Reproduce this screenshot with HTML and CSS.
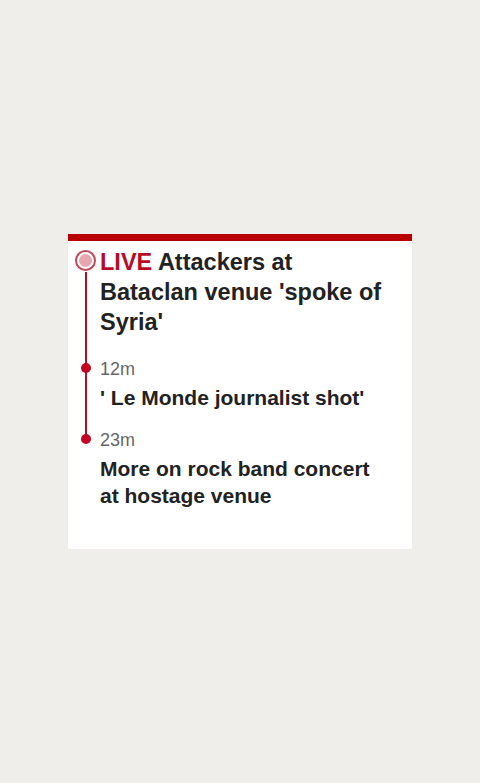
FILE: index.html
```html
<!DOCTYPE html>
<html>
<head>
<meta charset="utf-8">
<link rel="stylesheet" href="styles.css">
</head>
<body>
<div class="card">
  <div class="timeline">
    <span class="live-dot"><span class="live-core"></span></span>
    <h1 class="headline"><span class="live">LIVE</span> Attackers at Bataclan venue 'spoke of Syria'</h1>
    <div class="entry">
      <div class="time">12m</div>
      <div class="title">' Le Monde journalist shot'</div>
    </div>
    <div class="entry">
      <div class="time">23m</div>
      <div class="title">More on rock band concert at hostage venue</div>
    </div>
  </div>
</div>
</body>
</html>
```
FILE: styles.css
```css
html, body {
  margin: 0;
  height: 100%;
}
body {
  background: #f0eeea;
  display: flex;
  align-items: center;
  justify-content: center;
  font-family: "Liberation Sans", Arial, sans-serif;
  color: #222;
}
.card {
  width: 344px;
  box-sizing: border-box;
  background: #fff;
  border-top: 7px solid #b80000;
  padding: 6px 22px 40px 32px;
}
.timeline {
  position: relative;
}
.timeline::before {
  content: "";
  position: absolute;
  left: -15px;
  top: 25px;
  height: 167px;
  width: 2px;
  background: #b3102a;
}
.headline {
  margin: 0;
  font-size: 23.5px;
  line-height: 30px;
  font-weight: bold;
}
.live {
  color: #b80c26;
}
.live-dot {
  position: absolute;
  left: -25px;
  top: 3px;
  width: 17px;
  height: 17px;
  border: 2px solid #c0485a;
  border-radius: 50%;
  background: #fff;
  display: flex;
  align-items: center;
  justify-content: center;
}
.live-core {
  width: 13px;
  height: 13px;
  border-radius: 50%;
  background: #e8a6b0;
}
.entry {
  position: relative;
  margin-top: 21px;
}
.entry + .entry {
  margin-top: 18px;
}
.entry::before {
  content: "";
  position: absolute;
  left: -19px;
  top: 5px;
  width: 10px;
  height: 10px;
  border-radius: 50%;
  background: #c3001f;
}
.time {
  font-size: 18px;
  line-height: 22px;
  color: #666;
}
.title {
  margin-top: 4px;
  font-size: 21px;
  line-height: 27px;
  font-weight: bold;
}
```
